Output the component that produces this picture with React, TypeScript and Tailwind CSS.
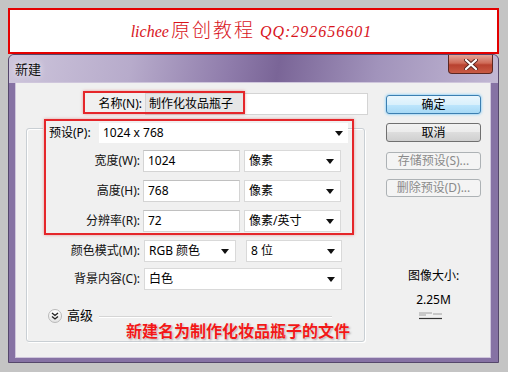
import React from "react";

function Arrow() {
  return (
    <svg width="8" height="5" viewBox="0 0 8 5" className="shrink-0">
      <path d="M0 0 H8 L4 5 Z" fill="#111" />
    </svg>
  );
}

function Drop({ w, text }: { w: string; text?: string }) {
  return (
    <div className={`${w} h-[22px] bg-white border border-[#d9d9d9] flex items-center justify-between pl-[4px] pr-[6px]`}>
      <span className="leading-[20px]">{text}</span>
      <Arrow />
    </div>
  );
}

function Field({ w, text }: { w: string; text: string }) {
  return (
    <div className={`${w} h-[22px] bg-white border border-[#d4d4d4] border-t-[#c0c0c0] pl-[4px] leading-[20px]`}>
      {text}
    </div>
  );
}

function Row({ label, children, mt }: { label: string; children: React.ReactNode; mt: string }) {
  return (
    <div className={`flex items-center h-[22px] ${mt}`}>
      <div className="w-[113px] text-right text-[#111]">{label}</div>
      <div className="ml-[3px] flex items-center">{children}</div>
    </div>
  );
}

export default function App() {
  return (
    <div className="w-[508px] h-[372px] bg-[#c4c4c4] pt-[8px] pl-[8px] pr-[9px] pb-[9px] flex flex-col overflow-hidden text-[12px] text-black font-['Noto_Sans','Noto_Sans_CJK_SC',sans-serif]">
      {/* banner */}
      <div className="h-[46px] shrink-0 border-2 border-[#e40000] bg-white flex items-center justify-center">
        <div className="flex items-baseline text-[#d8141c] italic font-['Liberation_Serif','Noto_Sans_CJK_SC',serif] -ml-[4px]">
          <span className="text-[16px]">lichee</span>
          <span className="text-[19px] not-italic ml-[2px] tracking-[2px] font-light">原创教程</span>
          <span className="text-[16px] ml-[5px] tracking-[1px]">QQ:292656601</span>
        </div>
      </div>

      {/* window */}
      <div className="flex-1 flex flex-col rounded-t-[6px] border border-[#55476b] bg-[#8672a4]">
        <div className="h-[28px] shrink-0 flex items-start justify-between rounded-t-[5px] bg-[linear-gradient(100deg,#cdc5db_0%,#b7abcb_25%,#8f7cab_45%,#7a6597_55%,#a193bb_75%,#c2b8d4_100%)]">
          <div className="pl-[6px] pt-[5px] text-[13px] text-[#111] [text-shadow:0_0_6px_#fff]">新建</div>
          <div className="mr-[5px] w-[45px] h-[19px] rounded-b-[4px] border border-t-0 border-[#5b2722] bg-[linear-gradient(#e3a598,#cf6a57_45%,#b8412f_55%,#c95b45)] flex items-center justify-center">
            <svg width="14" height="11" viewBox="0 0 14 11">
              <path d="M2 1 L12 10 M12 1 L2 10" stroke="#5a2620" strokeWidth="4" strokeLinecap="round" />
              <path d="M2 1 L12 10 M12 1 L2 10" stroke="#fff" strokeWidth="2.2" strokeLinecap="round" />
            </svg>
          </div>
        </div>

        {/* client */}
        <div className="flex-1 ml-[7px] mr-[8px] mb-[5px] bg-[#f0f0f0] relative flex shadow-[0_0_0_1px_#cfc6dc]">
          {/* left column */}
          <div className="w-[352px] flex flex-col">
            <div className="mt-[10px] flex items-center h-[22px]">
              <div className="w-[126px] text-right">名称(N):</div>
              <div className="ml-[3px] w-[223px] h-[22px] bg-white border border-[#d4d4d4] flex">
                <div className="w-[98px] bg-[#e6e6e6] pl-[3px] leading-[20px]">制作化妆品瓶子</div>
              </div>
            </div>

            <div className="mt-[13px] ml-[10px] w-[339px] h-[214px] border border-[#c9cfd4] rounded-[3px] shadow-[inset_1px_1px_0_#fff,1px_1px_0_#fff] flex flex-col">
              <div className="-mt-[6px] flex items-center h-[20px]">
                <div className="ml-[16px] w-[56px] pl-[6px] bg-[#f0f0f0]">预设(P):</div>
                <div className="w-[249px] h-[20px] bg-white flex items-center justify-between pl-[4px] pr-[5px]">
                  <span>1024 x 768</span>
                  <Arrow />
                </div>
              </div>
              <Row label="宽度(W):" mt="mt-[7px]">
                <Field w="w-[97px]" text="1024" />
                <div className="ml-[4px]"><Drop w="w-[97px]" text="像素" /></div>
              </Row>
              <Row label="高度(H):" mt="mt-[8px]">
                <Field w="w-[97px]" text="768" />
                <div className="ml-[4px]"><Drop w="w-[97px]" text="像素" /></div>
              </Row>
              <Row label="分辨率(R):" mt="mt-[8px]">
                <Field w="w-[97px]" text="72" />
                <div className="ml-[4px]"><Drop w="w-[97px]" text="像素/英寸" /></div>
              </Row>
              <Row label="颜色模式(M):" mt="mt-[8px]">
                <div className="ml-[1px]"><Drop w="w-[92px]" text="RGB 颜色" /></div>
                <div className="ml-[10px]"><Drop w="w-[96px]" text="8 位" /></div>
              </Row>
              <Row label="背景内容(C):" mt="mt-[6px]">
                <div className="ml-[1px]"><Drop w="w-[198px]" text="白色" /></div>
              </Row>
              <div className="mt-[19px] flex items-center h-[14px]">
                <div className="ml-[21px] w-[14px] h-[14px] rounded-full border border-[#b9b9b9] bg-[linear-gradient(#ffffff,#e4e4e4)] flex items-center justify-center">
                  <svg width="8" height="8" viewBox="0 0 8 8">
                    <path d="M1 1 L4 3.5 L7 1 M1 4.5 L4 7 L7 4.5" stroke="#222" strokeWidth="1.3" fill="none" />
                  </svg>
                </div>
                <div className="ml-[5px] text-[13px]">高级</div>
                <div className="ml-[6px] flex-1 mr-[32px] border-t border-[#d5d5d5] shadow-[0_1px_0_#fff]" />
              </div>
            </div>
          </div>

          {/* right column */}
          <div className="ml-[18px] w-[95px] flex flex-col pt-[12px]">
            <div className="h-[19px] rounded-[3px] border border-[#3c7fb1] bg-[linear-gradient(#eaf6fd,#d9f0fc_50%,#bee6fd_50%,#a7d9f5)] shadow-[0_0_3px_#5bc0ff] flex items-center justify-center">确定</div>
            <div className="mt-[9px] h-[19px] rounded-[3px] border border-[#707070] bg-[linear-gradient(#f2f2f2,#ebebeb_50%,#dddddd_50%,#cfcfcf)] flex items-center justify-center">取消</div>
            <div className="mt-[10px] h-[18px] rounded-[3px] border border-[#adb2b5] bg-[#f4f4f4] text-[#8a8a8a] flex items-center justify-center">存储预设(S)...</div>
            <div className="mt-[9px] h-[18px] rounded-[3px] border border-[#adb2b5] bg-[#f4f4f4] text-[#8a8a8a] flex items-center justify-center">删除预设(D)...</div>
            <div className="mt-[70px] flex flex-col items-center">
              <div>图像大小:</div>
              <div className="mt-[6px]">2.25M</div>
              <svg width="26" height="9" viewBox="0 0 26 9" className="mt-[2px] -ml-[6px]">
                <path d="M1 2 H14 M1 4 H8 M15 3 H24" stroke="#8a8a8a" strokeWidth="0.8" />
                <path d="M1 7.5 H24" stroke="#333" strokeWidth="1.2" />
              </svg>
            </div>
          </div>

          {/* overlays */}
          <div className="absolute left-[67px] top-[8px] w-[162px] h-[23px] border-2 border-[#e5262a] shadow-[0_0_3px_rgba(200,0,0,0.35)]" />
          <div className="absolute left-[28px] top-[36px] w-[310px] h-[116px] border-2 border-[#e5262a] shadow-[0_0_3px_rgba(200,0,0,0.35)]" />
          <div className="absolute left-[110px] top-[236px] text-[16px] font-bold text-[#f21818] tracking-[0px] [text-shadow:0_0_2px_#fff,1px_1px_2px_#999]">
            新建名为制作化妆品瓶子的文件
          </div>
        </div>
      </div>
    </div>
  );
}
